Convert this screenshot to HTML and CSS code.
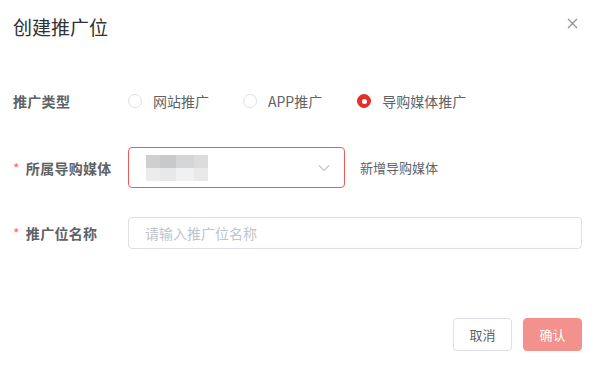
FILE: index.html
```html
<!DOCTYPE html>
<html lang="zh-CN">
<head>
    <meta charset="UTF-8">
    <title>创建推广位</title>
    <link rel="stylesheet" href="styles.css">
</head>
<body>
    <div class="dialog">
        <div class="dialog-header">
            <span class="dialog-title">创建推广位</span>
            <span class="dialog-close">
                <svg width="11" height="11" viewBox="0 0 11 11"><path d="M1 1L10 10M10 1L1 10" stroke="#909399" stroke-width="1.3" fill="none"/></svg>
            </span>
        </div>

        <div class="dialog-body">
            <div class="form-item">
                <label class="form-label">推广类型</label>
                <div class="form-content">
                    <label class="radio"><span class="radio-dot"></span><span class="radio-text">网站推广</span></label>
                    <label class="radio"><span class="radio-dot"></span><span class="radio-text">APP推广</span></label>
                    <label class="radio checked"><span class="radio-dot"></span><span class="radio-text">导购媒体推广</span></label>
                </div>
            </div>

            <div class="form-item">
                <label class="form-label"><span class="required">*</span>所属导购媒体</label>
                <div class="form-content">
                    <div class="select error">
                        <div class="mosaic">
                            <span class="m1"></span><span class="m2"></span><span class="m3"></span><span class="m4"></span>
                            <span class="m5"></span><span class="m6"></span><span class="m7"></span><span class="m8"></span>
                        </div>
                        <svg class="select-arrow" width="12" height="8" viewBox="0 0 12 8"><path d="M1 1.5L6 6.5L11 1.5" stroke="#c0c4cc" stroke-width="1.2" fill="none"/></svg>
                    </div>
                    <span class="link-add">新增导购媒体</span>
                </div>
            </div>

            <div class="form-item">
                <label class="form-label"><span class="required">*</span>推广位名称</label>
                <div class="form-content">
                    <input class="input" type="text" placeholder="请输入推广位名称">
                </div>
            </div>
        </div>

        <div class="dialog-footer">
            <button class="btn">取消</button>
            <button class="btn btn-danger">确认</button>
        </div>
    </div>
</body>
</html>
```

FILE: styles.css
```css
body {
    margin: 0;
    background-color: #fff;
    font-family: "Noto Sans CJK SC", "Liberation Sans", sans-serif;
    color: #606266;
}
.dialog {
    width: 600px;
    height: 369px;
    box-sizing: border-box;
}
.dialog-header {
    display: flex;
    justify-content: space-between;
    align-items: center;
    padding: 14px 22px 0 13px;
    height: 26px;
}
.dialog-title {
    font-size: 19px;
    line-height: 26px;
    color: #303133;
}
.dialog-close {
    display: flex;
    margin-top: -8px;
}
.dialog-body {
    padding: 41px 18px 0 13px;
}
.form-item {
    display: flex;
    align-items: center;
    height: 40px;
    margin-bottom: 26px;
}
.form-item:nth-child(2) {
    margin-bottom: 25px;
    height: 41px;
}
.form-label {
    width: 115px;
    flex-shrink: 0;
    font-size: 14px;
    font-weight: bold;
    color: #606266;
    letter-spacing: 0.3px;
}
.required {
    color: #f56c6c;
    margin-right: 6px;
    font-weight: normal;
}
.form-content {
    display: flex;
    align-items: center;
    flex: 1;
}
.radio {
    display: flex;
    align-items: center;
    margin-right: 34px;
    font-size: 14px;
    color: #606266;
}
.radio:nth-child(2) {
    margin-right: 35px;
}
.radio-dot {
    width: 12px;
    height: 12px;
    border: 1px solid #dcdfe6;
    border-radius: 50%;
    margin-right: 11px;
    box-sizing: content-box;
    display: flex;
    align-items: center;
    justify-content: center;
}
.radio.checked .radio-dot {
    background-color: #e4302a;
    border-color: #e4302a;
}
.radio.checked .radio-dot::after {
    content: "";
    width: 5px;
    height: 5px;
    border-radius: 50%;
    background-color: #fff;
}
.select {
    width: 217px;
    height: 41px;
    box-sizing: border-box;
    border: 1px solid #dcdfe6;
    border-radius: 4px;
    display: flex;
    align-items: center;
    justify-content: space-between;
    padding: 0 14px 0 17px;
}
.select.error {
    border-color: #ef5a55;
}
.mosaic {
    display: grid;
    grid-template-columns: 14px 16px 18px 14px;
    grid-template-rows: 13px 13px;
    filter: blur(0.6px);
}
.mosaic span { display: block; }
.m1 { background-color: #cfcfd0; }
.m2 { background-color: #c8c9ca; }
.m3 { background-color: #d4d5d6; }
.m4 { background-color: #dcdcdd; }
.m5 { background-color: #ececed; }
.m6 { background-color: #e8e8e9; }
.m7 { background-color: #f1f1f2; }
.m8 { background-color: #e9e9ea; }
.link-add {
    margin-left: 15px;
    font-size: 13px;
    color: #606266;
}
.input {
    width: 454px;
    height: 32px;
    box-sizing: border-box;
    border: 1px solid #dcdfe6;
    border-radius: 4px;
    padding: 0 16px;
    font-size: 14px;
    font-family: inherit;
    color: #606266;
    outline: none;
}
.input::placeholder {
    color: #c0c4cc;
}
.dialog-footer {
    display: flex;
    justify-content: flex-end;
    gap: 11px;
    padding: 39px 18px 0 0;
}
.btn {
    width: 59px;
    height: 33px;
    border: 1px solid #dcdfe6;
    border-radius: 4px;
    background-color: #fff;
    color: #606266;
    font-size: 13px;
    font-family: inherit;
    padding: 0;
    cursor: pointer;
}
.btn-danger {
    background-color: #f3918c;
    border-color: #f3918c;
    color: #fff;
}
```
